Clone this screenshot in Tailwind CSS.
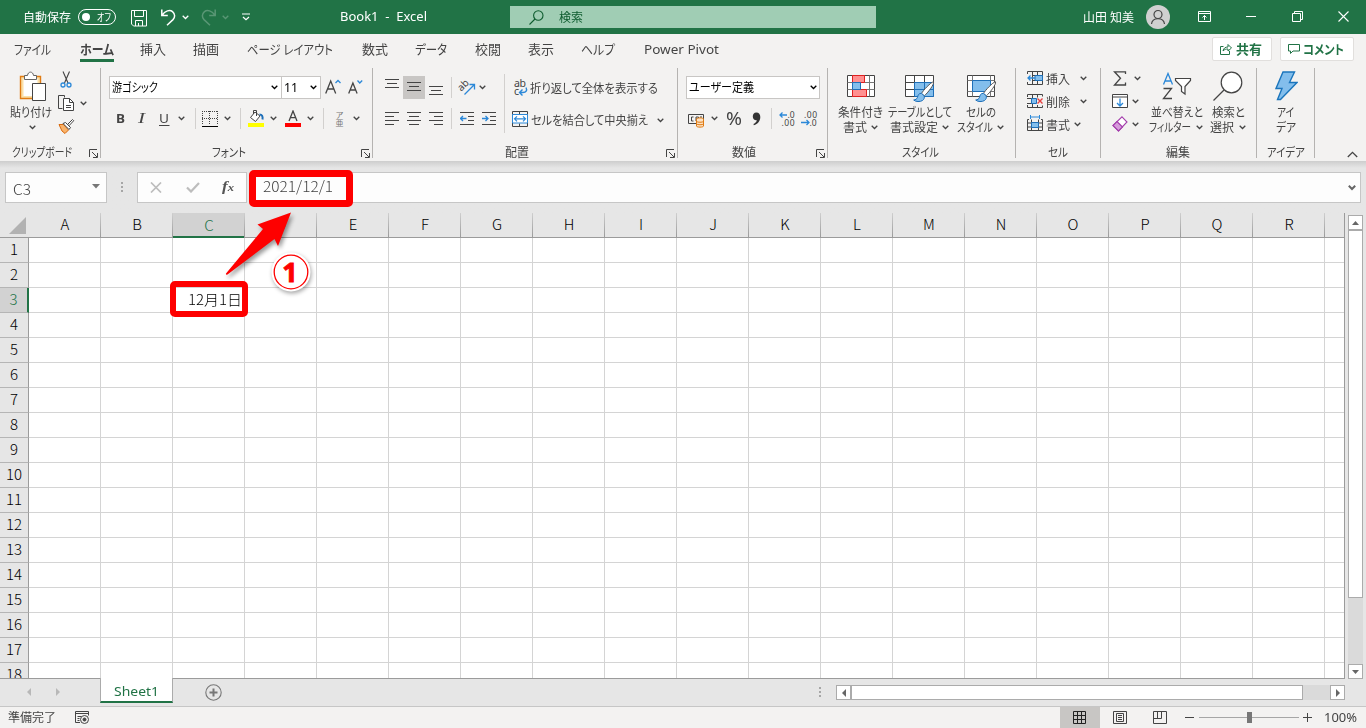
<!DOCTYPE html>
<html lang="ja">
<head>
    <meta charset="UTF-8">
    <meta name="viewport" content="width=device-width, initial-scale=1.0">
    <title>Book1 - Excel</title>
    <script src="https://cdn.jsdelivr.net/npm/@tailwindcss/browser@4"></script>
</head>
<body class="bg-[#e6e6e6] overflow-hidden font-['Noto_Sans','Noto_Sans_CJK_JP',sans-serif] text-[12px] leading-[15px] text-[#444] [font-feature-settings:'palt']">
    <!-- Shared symbols -->
    <svg class="hidden">
        <symbol id="chev" viewBox="0 0 7 5"><path d="M.7 .8 3.5 3.5 6.3 .8" fill="none" stroke="currentColor" stroke-width="1.3"/></symbol>
        <symbol id="launch" viewBox="0 0 9 9"><path d="M.5 8V.5H8M3 3l5 5M8.500 4v4.500H4" fill="none" stroke="currentColor"/></symbol>
        <symbol id="brush" viewBox="0 0 22 22"><path d="M20.500 .8C18 1 10 9.500 8.500 12.500l2.800 2.400C14.500 12 21.500 3.500 20.500.8z" fill="#fff" stroke="#555"/><path d="M8.500 12.300c-3 0-3.500 2-4 4-.5 1.700-2 2.500-3.800 2.700 2 2 6.500 2 8.800.5 1.700-1.200 2.200-3 1.700-4.700z" fill="#83beec" stroke="#1e6fb8"/></symbol>
    </svg>

    <div class="h-[728px] w-[1366px] flex flex-col relative">
        <!-- Title bar -->
        <header class="h-[34px] shrink-0 bg-[#217346] text-white flex items-center whitespace-nowrap">
            <span data-w="48" class="ml-[23px]">自動保存</span>
            <div class="ml-[7px] w-[38px] h-[16px] rounded-full border border-white flex items-center">
                <div class="ml-[3px] size-[8px] rounded-full bg-white"></div>
                <span data-w="14" class="ml-[7px] text-[10px] leading-[12px]">オフ</span>
            </div>
            <svg class="ml-[15px] mt-[2px] w-[16px] h-[17px]" viewBox="0 0 16 17" fill="none" stroke="#fff"><path d="M.5 .5h15v15.500H2.500l-2-2zM3.500 .5v6h9v-6M4.500 16v-5.500h7V16M7.500 13v3"/></svg>
            <svg class="ml-[14px] w-[15px] h-[17px]" viewBox="0 0 15 17" fill="none" stroke="#fff" stroke-width="1.500"><path d="M.8 .5v6h6M1 6.300C4 1.500 9 .5 11.500 2.600c3 2.600 2.500 6 .5 8L6 16.300"/></svg>
            <svg class="ml-[6px] w-[7px] h-[5px]"><use href="#chev"/></svg>
            <svg class="ml-[12px] w-[15px] h-[17px] opacity-25" viewBox="0 0 15 17" fill="none" stroke="#fff" stroke-width="1.500"><path d="M14.200 .5v6h-6M14 6.300C11 1.500 6 .5 3.500 2.600c-3 2.600-2.500 6-.5 8L9 16.300"/></svg>
            <svg class="ml-[6px] w-[7px] h-[5px] opacity-25"><use href="#chev"/></svg>
            <svg class="ml-[13px] w-[8px] h-[8px]" viewBox="0 0 8 8" fill="none" stroke="#fff" stroke-width="1.200"><path d="M0 1h8M1 4l3 2.700L7 4"/></svg>
            <span data-w="87" class="ml-[90px] mb-px whitespace-pre">Book1  -  Excel</span>
            <div class="ml-[83px] w-[366px] h-[22px] bg-[#a0cdb4] text-[#0e5c2f] flex items-center">
                <svg class="ml-[19px] size-[15px]" viewBox="0 0 15 15" fill="none" stroke="#0e5c2f" stroke-width="1.100"><circle cx="9.300" cy="5.500" r="4.700"/><path d="M6 9 .5 14.500"/></svg>
                <span data-w="24" class="ml-[15px]">検索</span>
            </div>
            <span data-w="51" class="ml-[207px]">山田 知美</span>
            <svg class="ml-[12px] size-[24px]" viewBox="0 0 24 24"><circle cx="12" cy="12" r="12" fill="#d0d0d0"/><g fill="none" stroke="#444" stroke-width="1.200"><circle cx="12" cy="9.500" r="4"/><path d="M5.500 19c.7-7 12.300-7 13 0"/></g></svg>
            <svg class="ml-[28px] -mt-[2px] w-[13px] h-[11px]" viewBox="0 0 13 11" fill="none" stroke="#fff"><path d="M.5 .5h12v10H.5zM.5 2.500h12M6.500 9V4.500M4.500 6.500l2-2 2 2"/></svg>
            <svg class="ml-[35px] -mt-[2px] w-[10px] h-[11px]" viewBox="0 0 10 11" stroke="#fff"><path d="M0 5.500h10"/></svg>
            <svg class="ml-[36px] -mt-[2px] size-[11px]" viewBox="0 0 11 11" fill="none" stroke="#fff"><path d="M.5 2.500h8v8h-8zM2.500 2.500v-2h8v8h-2"/></svg>
            <svg class="ml-[35px] -mt-[2px] size-[11px]" viewBox="0 0 11 11" stroke="#fff" stroke-width="1.100"><path d="M.5 .5l10 10M10.500 .5l-10 10"/></svg>
        </header>

        <!-- Tabs -->
        <nav class="h-[32px] shrink-0 bg-[#f3f2f1] flex items-start pt-[7px] text-[13px] leading-[17px] whitespace-nowrap">
            <span data-w="37" class="ml-[14px]">ファイル</span>
            <div class="ml-[29px] w-[34px] h-[21px] border-b-3 border-[#217346] font-bold"><span data-w="34">ホーム</span></div>
            <span data-w="26" class="ml-[26px]">挿入</span>
            <span data-w="26" class="ml-[27px]">描画</span>
            <span data-w="86" class="ml-[28px]">ページ レイアウト</span>
            <span data-w="26" class="ml-[29px]">数式</span>
            <span data-w="32" class="ml-[27px]">データ</span>
            <span data-w="26" class="ml-[28px]">校閲</span>
            <span data-w="26" class="ml-[27px]">表示</span>
            <span data-w="34" class="ml-[27px]">ヘルプ</span>
            <span data-w="75" class="ml-[29px] text-[12.500px]">Power Pivot</span>
            <div class="ml-[493px] -mt-[4px] w-[60px] h-[24px] bg-white border border-[#e1dfdd] rounded-[2px] flex items-center text-[#217346] font-bold">
                <svg class="ml-[7px] size-[12px]" viewBox="0 0 12 12" fill="none" stroke="#217346"><path d="M3.500 3.500h-3v8h9V8M3 8c.5-3 2.500-4 5-4V1.500L11.500 5 8 8V6C6 6 4.500 6.300 3 8z"/></svg>
                <span data-w="26" class="ml-[4px]">共有</span>
            </div>
            <div class="ml-[8px] -mt-[4px] w-[74px] h-[24px] bg-white border border-[#e1dfdd] rounded-[2px] flex items-center text-[#217346] font-bold">
                <svg class="ml-[7px] size-[12px]" viewBox="0 0 12 12" fill="none" stroke="#217346"><path d="M.5 1.500h11v6.500H5l-2.500 2.500V8h-2z"/></svg>
                <span data-w="41" class="ml-[3px]">コメント</span>
            </div>
        </nav>

        <!-- Ribbon -->
        <section class="h-[95px] shrink-0 bg-[#f3f2f1] flex items-start pt-[2px] whitespace-nowrap">
            <!-- Clipboard -->
            <div class="w-[101px] h-[90px] border-r border-[#b5b3b1] flex flex-col">
                <div class="h-[76px] flex">
                    <div class="ml-[10px] w-[42px] flex flex-col pt-[3px]">
                        <svg class="w-[28px] h-[31px] ml-[9px]" viewBox="0 0 28 31" fill="none"><path d="M1.500 5.500h20v22h-20z" fill="#fbe0a8" stroke="#e07b12" stroke-width="1.400"/><path d="M4.500 8h14v17h-14z" fill="#fff"/><path d="M5.500 8.500v-4h3C9 0 14 0 14.500 4.500h3v4z" fill="#fff" stroke="#666"/><path d="M13.500 12.500h13v17h-13z" fill="#fff" stroke="#444"/></svg>
                        <span data-w="42" class="mt-[3px]">貼り付け</span>
                        <svg class="mt-[5px] ml-[19px] w-[7px] h-[5px]"><use href="#chev"/></svg>
                    </div>
                    <div class="ml-[6px] pt-[3px] flex flex-col">
                        <svg class="w-[17px] h-[18px]" viewBox="0 0 17 18" fill="none"><path d="M5 .5l5 11.500M11.500 .5l-5 11.500" stroke="#444" stroke-width="1.100"/><circle cx="5" cy="14" r="2" stroke="#2b88d8" stroke-width="1.300"/><circle cx="11" cy="14" r="2" stroke="#2b88d8" stroke-width="1.300"/></svg>
                        <div class="mt-[5px] flex items-center">
                            <svg class="w-[17px] h-[18px]" viewBox="0 0 17 18" fill="none" stroke="#444"><path d="M6.500 3.500v-2h-6v13h4"/><path d="M5.500 4.500h6l4 4v8h-10z" fill="#fff"/><path d="M11.500 4.500v4h4M8 11.500h5M8 13.500h5"/></svg>
                            <svg class="ml-[5px] w-[7px] h-[5px]"><use href="#chev"/></svg>
                        </div>
                        <svg class="mt-[6px] w-[17px] h-[17px]" viewBox="0 0 17 17"><path d="M1 6.500l3 6.500 3 2.500 3.500-3.500-5-5.500z" fill="#f9b36b" stroke="#d9690c"/><path d="M5 5.500l6 6 1.500-2-5-5z" fill="#fff" stroke="#444"/><path d="M9.500 6.500l5-5 1.200 1.200-4.700 5z" fill="#fff" stroke="#444"/></svg>
                    </div>
                </div>
                <div class="flex h-[14px] shrink-0"><span data-w="60" class="ml-[12px] mt-px">クリップボード</span><svg class="ml-[17px] mt-[5px] size-[9px]"><use href="#launch"/></svg></div>
            </div>
            <!-- Font -->
            <div class="w-[272px] h-[90px] border-r border-[#b5b3b1] flex flex-col">
                <div class="mt-[8px] h-[23px] flex items-center text-black">
                    <div class="ml-[8px] w-[173px] h-[23px] bg-white border border-[#c8c6c4] flex items-center"><span data-w="46" class="ml-[2px]">游ゴシック</span><svg class="ml-[113px] w-[7px] h-[5px]"><use href="#chev"/></svg></div>
                    <div class="-ml-px w-[40px] h-[23px] bg-white border border-[#c8c6c4] flex items-center"><span data-w="14" class="ml-[2px]">11</span><svg class="ml-[12px] w-[7px] h-[5px]"><use href="#chev"/></svg></div>
                    <svg class="ml-[4px] -mt-[2px] w-[16px] h-[16px]" viewBox="0 0 16 16" fill="none"><path d="M.7 14.500 5.700 2 10.700 14.500M2.500 10h6.500" stroke="#444" stroke-width="1.300"/><path d="M10.500 4l2.500-2.500L15.500 4" stroke="#2b88d8" stroke-width="1.300"/></svg>
                    <svg class="ml-[7px] -mt-[2px] w-[15px] h-[16px]" viewBox="0 0 15 16" fill="none"><path d="M.7 14.500 4.900 4 9.100 14.500M2.300 11h5.200" stroke="#444" stroke-width="1.300"/><path d="M9.500 1.500l2.300 2.500L14.200 1.500" stroke="#2b88d8" stroke-width="1.300"/></svg>
                </div>
                <div class="mt-[8px] h-[23px] mb-[14px] flex items-center">
                    <span data-w="9" class="ml-[15px] font-bold text-[13px]">B</span>
                    <span data-w="7" class="ml-[13px] font-['Liberation_Serif',serif] italic text-[14px]">I</span>
                    <span data-w="10" class="ml-[14px] border-b border-[#444] text-[13px] leading-[13px]">U</span>
                    <svg class="ml-[9px] w-[7px] h-[5px]"><use href="#chev"/></svg>
                    <div class="ml-[10px] w-px h-[21px] bg-[#d2d0ce]"></div>
                    <svg class="ml-[6px] size-[16px]" viewBox="0 0 16 16" fill="none" stroke="#444"><path d="M0 .5h16M.5 0v14M15.500 0v14M7.500 0v14M0 7.500h16" stroke-dasharray="1 1" shape-rendering="crispEdges"/><path d="M0 15.500h16" stroke="#000"/></svg>
                    <svg class="ml-[6px] w-[7px] h-[5px]"><use href="#chev"/></svg>
                    <div class="ml-[9px] w-px h-[21px] bg-[#d2d0ce]"></div>
                    <svg class="ml-[7px] w-[17px] h-[17px]" viewBox="0 0 17 17" fill="none"><path d="M7 2 2.500 7.500 7.500 11.500 12 6 7 2zM8.500 6V.5h-3V4" stroke="#444" fill="#fff"/><path d="M11.500 4.500c2.500 0 3.500 1.500 3 5" stroke="#1e6fb8" stroke-width="2"/><path d="M0 13h16v4H0z" fill="#ff0"/></svg>
                    <svg class="ml-[5px] w-[7px] h-[5px]"><use href="#chev"/></svg>
                    <svg class="ml-[8px] w-[16px] h-[17px]" viewBox="0 0 16 17" fill="none"><path d="M4 11 8 1l4 10M5.500 7.700h5" stroke="#444" stroke-width="1.300"/><path d="M0 13h16v4H0z" fill="#f00"/></svg>
                    <svg class="ml-[6px] w-[7px] h-[5px]"><use href="#chev"/></svg>
                    <div class="ml-[9px] w-px h-[21px] bg-[#d2d0ce]"></div>
                    <div class="ml-[11px] w-[9px] flex flex-col items-center text-[8px] leading-[8px] text-[#777]"><span>ア</span><span>亜</span></div>
                    <svg class="ml-[9px] w-[7px] h-[5px]"><use href="#chev"/></svg>
                </div>
                <div class="flex h-[14px] shrink-0"><span data-w="34" class="ml-[111px] mt-px">フォント</span><svg class="ml-[115px] mt-[5px] size-[9px]"><use href="#launch"/></svg></div>
            </div>
            <!-- Alignment -->
            <div class="w-[305px] h-[90px] border-r border-[#b5b3b1] flex flex-col">
                <div class="h-[76px] flex">
                    <div class="w-[131px] flex flex-col">
                        <div class="mt-[8px] h-[23px] flex items-center">
                            <svg class="ml-[12px] w-[14px] h-[21px]" viewBox="0 0 14 21" stroke="#444"><path d="M0 2.500h14M2 6.500h10M0 10.500h14"/></svg>
                            <div class="ml-[4px] w-[22px] h-[23px] bg-[#c8c6c4] flex items-center justify-center"><svg class="w-[14px] h-[21px]" viewBox="0 0 14 21" stroke="#444"><path d="M0 5.500h14M2 9.500h10M0 13.500h14"/></svg></div>
                            <svg class="ml-[4px] w-[14px] h-[21px]" viewBox="0 0 14 21" stroke="#444"><path d="M0 9.500h14M2 13.500h10M0 17.500h14"/></svg>
                            <div class="ml-[8px] w-px h-[21px] bg-[#d2d0ce]"></div>
                            <svg class="ml-[7px] w-[17px] h-[17px] overflow-visible" viewBox="0 0 17 17" fill="none"><g transform="rotate(-45 5 7)"><text x="-1" y="9" font-size="10" fill="#444" font-family="Noto Sans">ab</text></g><path d="M5.500 15.500 15 6M10.500 5.500H15.500V10.500" stroke="#2b88d8" stroke-width="1.300"/></svg>
                            <svg class="ml-[3px] w-[7px] h-[5px]"><use href="#chev"/></svg>
                        </div>
                        <div class="mt-[8px] h-[23px] flex items-center">
                            <svg class="ml-[12px] w-[14px] h-[15px]" viewBox="0 0 14 15" stroke="#444"><path d="M0 1.500h14M0 5.500h9M0 9.500h14M0 13.500h9"/></svg>
                            <svg class="ml-[8px] w-[14px] h-[15px]" viewBox="0 0 14 15" stroke="#444"><path d="M0 1.500h14M2 5.500h10M0 9.500h14M2 13.500h10"/></svg>
                            <svg class="ml-[8px] w-[14px] h-[15px]" viewBox="0 0 14 15" stroke="#444"><path d="M0 1.500h14M5 5.500h9M0 9.500h14M5 13.500h9"/></svg>
                            <div class="ml-[8px] w-px h-[21px] bg-[#d2d0ce]"></div>
                            <svg class="ml-[8px] w-[14px] h-[15px]" viewBox="0 0 14 15" fill="none"><path d="M0 1.500h14M8 5.500h6M8 9.500h6M0 13.500h14" stroke="#444"/><path d="M6.500 7.500h-6M3 5 .5 7.500 3 10" stroke="#2b88d8" stroke-width="1.300"/></svg>
                            <svg class="ml-[8px] w-[14px] h-[15px]" viewBox="0 0 14 15" fill="none"><path d="M0 1.500h14M8 5.500h6M8 9.500h6M0 13.500h14" stroke="#444"/><path d="M0 7.500h6M3.500 5 6 7.500 3.500 10" stroke="#2b88d8" stroke-width="1.300"/></svg>
                        </div>
                    </div>
                    <div class="mt-[6px] w-px h-[59px] bg-[#d2d0ce]"></div>
                    <div class="flex flex-col">
                        <div class="mt-[9px] h-[22px] flex items-center">
                            <svg class="ml-[8px] -mt-[2px] w-[16px] h-[18px] overflow-visible" viewBox="0 0 16 18" fill="none"><g font-family="Noto Sans" font-size="10.500" fill="#444"><text x="1" y="9" textLength="12">ab</text><text x="1" y="17">c</text></g><path d="M13 9.500c1.500 3 0 5-3 5H7M9.500 11.500 6.500 14.500 9.500 17.500" stroke="#2b88d8" stroke-width="1.400"/></svg>
                            <span data-w="128" class="ml-px">折り返して全体を表示する</span>
                        </div>
                        <div class="mt-[10px] h-[22px] flex items-center">
                            <svg class="ml-[7px] -mt-[2px] size-[16px]" viewBox="0 0 16 16" fill="none"><path d="M.5 .5h15v15H.5zM7.500 .5v3M7.500 12.500v3" stroke="#444"/><path d="M.5 3.500h15v8.500H.5z" fill="#fff" stroke="#2b88d8"/><path d="M2.500 7.800h11M5 5.300 2.500 7.800 5 10.300M11 5.300l2.500 2.500L11 10.300" stroke="#2b88d8" stroke-width="1.200"/></svg>
                            <span data-w="117" class="ml-[3px]">セルを結合して中央揃え</span>
                            <svg class="ml-[9px] w-[7px] h-[5px]"><use href="#chev"/></svg>
                        </div>
                    </div>
                </div>
                <div class="flex h-[14px] shrink-0"><span data-w="24" class="ml-[132px] mt-px">配置</span><svg class="ml-[137px] mt-[5px] size-[9px]"><use href="#launch"/></svg></div>
            </div>
            <!-- Number -->
            <div class="w-[150px] h-[90px] border-r border-[#b5b3b1] flex flex-col">
                <div class="mt-[8px] ml-[8px] w-[134px] h-[23px] bg-white border border-[#c8c6c4] flex items-center text-black"><span data-w="65" class="ml-[2px]">ユーザー定義</span><svg class="ml-[56px] w-[7px] h-[5px]"><use href="#chev"/></svg></div>
                <div class="mt-[8px] h-[23px] mb-[14px] flex items-center">
                    <svg class="ml-[10px] mt-[3px] w-[17px] h-[15px]" viewBox="0 0 17 15" fill="none"><path d="M.5 1.500h15v9H.5z" stroke="#444"/><path d="M5.500 4h-2v4h2M8 4v4M8 4h2.500v2H8M12 4h2" stroke="#444"/><path d="M8.500 6v7c0 1.500 7 1.500 7 0V6c0-1.500-7-1.500-7 0zM8.500 8.500c1 1 6 1 7 0M8.500 11c1 1 6 1 7 0" fill="#fde2c4" stroke="#e07b12"/></svg>
                    <svg class="ml-[6px] w-[7px] h-[5px]"><use href="#chev"/></svg>
                    <span data-w="16" class="ml-[8px] text-[18px]">%</span>
                    <svg class="ml-[10px] w-[9px] h-[14px]" viewBox="0 0 9 14"><path d="M4.300 .5c2.700 0 4 2 4 4.500 0 4-2.500 7-6.500 8.200L1.500 12c2-1 3-2 3.300-3.700-2.500.2-4-1.500-4-3.700S2 .5 4.300.5z" fill="#333"/></svg>
                    <div class="ml-[10px] w-px h-[21px] bg-[#d2d0ce]"></div>
                    <svg class="ml-[7px] w-[17px] h-[17px]" viewBox="0 0 17 17" fill="none"><g font-family="Noto Sans" font-size="8.500" fill="#444"><text x="8.500" y="8" textLength="7">.0</text><text x="2.500" y="16" textLength="13">.00</text></g><path d="M8 5H1M3.500 2.500 1 5l2.500 2.500" stroke="#2b88d8" stroke-width="1.300"/></svg>
                    <svg class="ml-[5px] w-[17px] h-[17px]" viewBox="0 0 17 17" fill="none"><g font-family="Noto Sans" font-size="8.500" fill="#444"><text x="3" y="8" textLength="13">.00</text><text x="8.500" y="16" textLength="7">.0</text></g><path d="M0 12.500h8M5.500 10 8 12.500 5.500 15" stroke="#2b88d8" stroke-width="1.300"/></svg>
                </div>
                <div class="flex h-[14px] shrink-0"><span data-w="24" class="ml-[54px] mt-px">数値</span><svg class="ml-[60px] mt-[5px] size-[9px]"><use href="#launch"/></svg></div>
            </div>
            <!-- Styles -->
            <div class="w-[188px] h-[90px] border-r border-[#b5b3b1] flex flex-col">
                <div class="h-[76px] flex">
                    <div class="ml-[10px] w-[45px] flex flex-col pt-[7px]">
                        <svg class="ml-[9px] w-[29px] h-[28px]" viewBox="0 0 29 28" fill="none"><path d="M.5 .5h27v21H.5z" fill="#fff" stroke="#444"/><path d="M.5 7.500h27M.5 14.500h27M5.500 .5v21M22.500 .5v21" stroke="#777"/><path d="M5.500 .5h12v7h-12zM5.500 14.500h14v7h-14z" fill="#ff9090" stroke="#e02020"/><path d="M5.500 7.500h8v7h-8z" fill="#83beec" stroke="#1e6fb8"/></svg>
                        <span data-w="45" class="mt-[2px]">条件付き</span>
                        <div class="flex items-center pl-[5px]"><span data-w="24">書式</span><svg class="ml-[4px] w-[7px] h-[5px]"><use href="#chev"/></svg></div>
                    </div>
                    <div class="ml-[5px] w-[64px] flex flex-col pt-[7px]">
                        <svg class="ml-[17px] w-[32px] h-[28px]" viewBox="0 0 32 28" fill="none"><path d="M.5 .5h28v21H.5z" fill="#fff" stroke="#444"/><path d="M10 7.500h18.500v14H10z" fill="#83beec"/><path d="M.5 7.500h28M.5 14.500h28M9.500 .5v21M19.500 .5v21" stroke="#444"/><path d="M9.500 7.500h19v14h-19zM9.500 14.500h19M19.500 7.500v14" stroke="#1e6fb8"/><use href="#brush" x="8" y="6" width="22" height="22"/></svg>
                        <span data-w="64" class="mt-[2px]">テーブルとして</span>
                        <div class="flex items-center pl-[2px]"><span data-w="48">書式設定</span><svg class="ml-[4px] w-[7px] h-[5px]"><use href="#chev"/></svg></div>
                    </div>
                    <div class="ml-[5px] w-[50px] flex flex-col pt-[7px]">
                        <svg class="ml-[10px] w-[32px] h-[28px]" viewBox="0 0 32 28" fill="none"><path d="M.5 .5h27v21H.5z" fill="#fff" stroke="#444"/><path d="M.5 5.500h27M.5 16.500h27M5.500 .5v21M23.500 .5v21" stroke="#777"/><path d="M5.500 5.500h18v11h-18z" fill="#83beec" stroke="#1e6fb8"/><use href="#brush" x="8" y="6" width="22" height="22"/></svg>
                        <span data-w="30" class="mt-[2px] ml-[9px]">セルの</span>
                        <div class="flex items-center"><span data-w="36">スタイル</span><svg class="ml-[4px] w-[7px] h-[5px]"><use href="#chev"/></svg></div>
                    </div>
                </div>
                <div class="flex h-[14px] shrink-0"><span data-w="37" class="ml-[74px] mt-px">スタイル</span></div>
            </div>
            <!-- Cells -->
            <div class="w-[85px] h-[90px] border-r border-[#b5b3b1] flex flex-col">
                <div class="h-[76px] pl-[11px] flex flex-col">
                    <div class="h-[21px] flex items-center">
                        <svg class="w-[17px] h-[15px]" viewBox="0 0 17 15" fill="none"><path d="M.5 3V.5h15v13H.5V11M5.500 .5v13M10.500 .5v13M5 4.500h11M5 9.500h11" stroke="#444"/><path d="M8 4.500h7.500v5H8z" fill="#83beec" stroke="#1e6fb8"/><path d="M8 7H1M3.500 4.500 1 7l2.500 2.500" stroke="#2b88d8" stroke-width="1.300"/></svg>
                        <span data-w="24" class="ml-[2px] mt-[1px]">挿入</span><svg class="ml-[10px] w-[7px] h-[5px]"><use href="#chev"/></svg>
                    </div>
                    <div class="h-[25px] flex items-center">
                        <svg class="w-[17px] h-[15px]" viewBox="0 0 17 15" fill="none"><path d="M.5 3V.5h15v2M.5 11v2.500h15v-2M5.500 .5v4M10.500 .5v3M5.500 9v4.500M10.500 11v2.500M0 4.500h5M0 9.500h5" stroke="#444"/><path d="M4.500 4.500h5v5h-5z" fill="#83beec" stroke="#1e6fb8"/><path d="M10.500 4.500l5 5M15.500 4.500l-5 5" stroke="#e84040" stroke-width="1.400"/></svg>
                        <span data-w="24" class="ml-[2px] mt-[1px]">削除</span><svg class="ml-[10px] w-[7px] h-[5px]"><use href="#chev"/></svg>
                    </div>
                    <div class="h-[21px] flex items-center">
                        <svg class="-mt-[2px] w-[17px] h-[17px]" viewBox="0 0 17 17" fill="none"><path d="M2 4.500H.5v11h15v-11H14M0 8h16M0 12h16M4.500 4.500v11M11.500 4.500v11" stroke="#444"/><path d="M4.500 7.500h7v5h-7z" fill="#83beec" stroke="#1e6fb8"/><path d="M3.500 0v4M12.500 0v4M3.500 2h9" stroke="#2b88d8"/></svg>
                        <span data-w="24" class="ml-[2px] mt-[1px]">書式</span><svg class="ml-[4px] w-[7px] h-[5px]"><use href="#chev"/></svg>
                    </div>
                </div>
                <div class="flex h-[14px] shrink-0"><span data-w="20" class="ml-[32px] mt-px">セル</span></div>
            </div>
            <!-- Editing -->
            <div class="w-[156px] h-[90px] border-r border-[#b5b3b1] flex flex-col">
                <div class="h-[76px] flex">
                    <div class="pl-[11px] w-[48px] flex flex-col">
                        <div class="h-[21px] flex items-center"><svg class="w-[17px] h-[15px]" viewBox="0 0 17 15" fill="none"><path d="M13.500 3V.8H2.500L8.500 7.300 2.500 14h11v-2.500" stroke="#444" stroke-width="1.300"/></svg><svg class="ml-[5px] w-[7px] h-[5px]"><use href="#chev"/></svg></div>
                        <div class="h-[24px] flex items-center"><svg class="w-[17px] h-[15px]" viewBox="0 0 17 15" fill="none"><path d="M.5 .5h15v13H.5zM.5 3h15" stroke="#444" fill="#fff"/><path d="M8 4.500v7M5 9l3 3 3-3" stroke="#2b88d8" stroke-width="1.300"/></svg><svg class="ml-[3px] w-[7px] h-[5px]"><use href="#chev"/></svg></div>
                        <div class="h-[22px] flex items-center"><svg class="w-[17px] h-[16px]" viewBox="0 0 17 16" fill="none" stroke="#a33cab" stroke-width="1.100"><path d="M10 .8 15 6 6.500 15 1 9.500z" fill="#fff"/><path d="M5 5.500 10.500 11 6.500 15 1 9.500z" fill="#d69bdb"/></svg><svg class="ml-[3px] w-[7px] h-[5px]"><use href="#chev"/></svg></div>
                    </div>
                    <div class="w-[54px] flex flex-col pt-[4px]">
                        <svg class="ml-[13px] w-[30px] h-[30px]" viewBox="0 0 30 30" fill="none" stroke-width="1.300"><path d="M1.500 12.500 6 1.500l4.500 11M3 9h6" stroke="#2b88d8"/><path d="M1.500 16.500h8L1.500 26.500h8.500" stroke="#444"/><path d="M13.500 6.500h15v2L23 14.500V22l-3.500-2.500v-5L13.500 8.500z" stroke="#444" fill="#fff" stroke-width="1.200"/></svg>
                        <span data-w="52" class="mt-[3px] ml-[2px]">並べ替えと</span>
                        <div class="flex items-center"><span data-w="42">フィルター</span><svg class="ml-[5px] w-[7px] h-[5px]"><use href="#chev"/></svg></div>
                    </div>
                    <div class="ml-[7px] w-[36px] flex flex-col pt-[3px]">
                        <svg class="ml-[3px] w-[30px] h-[31px]" viewBox="0 0 30 31" fill="none" stroke="#444" stroke-width="1.200"><circle cx="18.500" cy="11.500" r="10.300" fill="#fff"/><path d="M11 19 .5 29.500"/></svg>
                        <span data-w="33" class="mt-[3px] ml-[2px]">検索と</span>
                        <div class="flex items-center"><span data-w="24">選択</span><svg class="ml-[5px] w-[7px] h-[5px]"><use href="#chev"/></svg></div>
                    </div>
                </div>
                <div class="flex h-[14px] shrink-0"><span data-w="24" class="ml-[65px] mt-px">編集</span></div>
            </div>
            <!-- Ideas -->
            <div class="w-[58px] h-[90px] border-r border-[#b5b3b1] flex flex-col">
                <div class="h-[76px] pt-[3px] flex flex-col">
                    <svg class="ml-[18px] w-[23px] h-[31px]" viewBox="0 0 23 31"><path d="M8 1h11.500l-5 10.500H22L5.500 28.500h-3L7 17.500H1z" fill="#83beec" stroke="#1b75bc" stroke-width="1.400"/></svg>
                    <span data-w="17" class="mt-[3px] ml-[20px]">アイ</span>
                    <span data-w="20" class="ml-[19px]">デア</span>
                </div>
                <div class="flex h-[14px] shrink-0"><span data-w="38" class="ml-[10px] mt-px">アイデア</span></div>
            </div>
            <svg class="ml-[32px] mt-[83px] w-[11px] h-[7px]" viewBox="0 0 11 7" fill="none" stroke="#444" stroke-width="1.300"><path d="M.8 6 5.500 1.300 10.200 6"/></svg>
        </section>

        <!-- Formula bar -->
        <section class="h-[52px] shrink-0 flex items-start pt-[11px] bg-linear-to-b from-[#cdcdcd] to-[#e6e6e6] to-[7px] text-[#444]">
            <div class="ml-[5px] w-[102px] h-[31px] bg-[#fdfdfd] border border-[#c6c6c6] flex items-center">
                <span data-w="18" class="ml-[7px] mt-[3px] text-[14px] font-['Noto_Sans_CJK_JP',sans-serif] font-light">C3</span>
                <svg class="ml-[61px] -mt-[2px] w-[8px] h-[5px]" viewBox="0 0 8 5"><path d="M0 0h8L4 4.500z" fill="#777"/></svg>
            </div>
            <svg class="ml-[14px] mt-[10px] w-[3px] h-[11px]" viewBox="0 0 3 11" fill="#a6a6a6"><path d="M0 0h2v2H0zM0 4h2v2H0zM0 8h2v2H0z"/></svg>
            <div class="ml-[13px] w-[110px] h-[31px] bg-[#fdfdfd] border border-[#c6c6c6] flex items-center">
                <svg class="ml-[12px] w-[12px] h-[11px]" viewBox="0 0 12 11" stroke="#bdbdbd" stroke-width="1.700"><path d="M1 .5l10 10M11 .5 1 10.500"/></svg>
                <svg class="ml-[24px] w-[14px] h-[11px]" viewBox="0 0 14 11" fill="none" stroke="#bdbdbd" stroke-width="2.200"><path d="M1 5.500l4 4L13 1"/></svg>
                <span data-w="12" class="ml-[22px] -mt-[2px] font-['Liberation_Serif',serif] italic font-bold text-[15px] text-[#555]">f<span class="text-[11px]">x</span></span>
            </div>
            <div class="ml-[3px] w-[1111px] h-[31px] bg-[#fdfdfd] border border-[#c6c6c6] flex items-center">
                <span data-w="70" class="ml-[12px] mb-[4px] text-[15px] font-['Noto_Sans_CJK_JP',sans-serif] font-light">2021/12/1</span>
                <svg class="ml-[1015px] w-[8px] h-[6px]" viewBox="0 0 8 6" fill="none" stroke="#666" stroke-width="2"><path d="M.8 .8 4 4 7.200 .8"/></svg>
            </div>
        </section>

        <!-- Sheet -->
        <main class="h-[466px] shrink-0 flex font-['Noto_Sans_CJK_JP',sans-serif] font-light text-[15px] text-black">
            <div class="w-[1345px] h-[466px] border-r border-b border-[#9b9b9b] overflow-hidden">
                <div id="colHeads" class="h-[25px] flex bg-[#e6e6e6] border-b border-[#9b9b9b]">
                    <div class="w-[29px] shrink-0 flex items-end justify-end pb-[3px] pr-[3px]"><svg class="size-[17px]" viewBox="0 0 17 17"><path d="M17 0v17H0z" fill="#b2b2b2"/></svg></div>
                </div>
                <div id="rows" class="bg-white"></div>
            </div>
            <!-- Vertical scroll bar -->
            <div class="ml-[3px] mt-[2px] w-[15px] h-[464px] bg-[#dadada] flex flex-col">
                <div class="h-[15px] border border-[#ababab] bg-white flex items-center justify-center"><svg class="w-[7px] h-[4px]" viewBox="0 0 7 4"><path d="M3.500 0 7 4H0z" fill="#666"/></svg></div>
                <div class="h-[368px] border border-[#ababab] bg-white"></div>
                <div class="mt-auto h-[15px] border border-[#ababab] bg-white flex items-center justify-center"><svg class="w-[7px] h-[4px]" viewBox="0 0 7 4"><path d="M3.500 4 7 0H0z" fill="#666"/></svg></div>
            </div>
        </main>

        <!-- Sheet tabs -->
        <div class="h-[27px] shrink-0 flex items-start">
            <svg class="ml-[27px] mt-[9px] w-[5px] h-[8px]" viewBox="0 0 5 8"><path d="M4 0v8L0 4z" fill="#b8b8b8"/></svg>
            <svg class="ml-[24px] mt-[9px] w-[5px] h-[8px]" viewBox="0 0 5 8"><path d="M0 0v8l4-4z" fill="#b8b8b8"/></svg>
            <div class="ml-[39px] -mt-px w-[73px] h-[25px] bg-white border-x border-x-[#ababab] border-b-2 border-b-[#217346] flex items-center pt-[3px] text-[#217346]"><span data-w="45" class="ml-[13px] text-[12.500px]">Sheet1</span></div>
            <svg class="ml-[32px] mt-[5px] size-[17px]" viewBox="0 0 17 17" fill="none" stroke="#777"><circle cx="8.500" cy="8.500" r="7.700" stroke-width="1.100"/><path d="M4.500 8.500h8M8.500 4.500v8" stroke-width="2"/></svg>
            <svg class="ml-[597px] mt-[8px] w-[2px] h-[10px]" viewBox="0 0 2 10" fill="#a6a6a6"><path d="M0 0h2v2H0zM0 4h2v2H0zM0 8h2v2H0z"/></svg>
            <div class="ml-[15px] mt-[6px] w-[509px] h-[15px] bg-[#dadada] flex">
                <div class="w-[15px] border border-[#ababab] bg-white flex items-center justify-center"><svg class="w-[4px] h-[8px]" viewBox="0 0 4 8"><path d="M4 0v8L0 4z" fill="#666"/></svg></div>
                <div class="w-[452px] border border-[#ababab] bg-white"></div>
                <div class="ml-auto w-[15px] border border-[#ababab] bg-white flex items-center justify-center"><svg class="w-[4px] h-[8px]" viewBox="0 0 4 8"><path d="M0 0v8l4-4z" fill="#666"/></svg></div>
            </div>
        </div>

        <!-- Status bar -->
        <footer class="h-[22px] shrink-0 bg-[#f3f2f1] border-t border-[#c6c6c6] flex items-center whitespace-nowrap">
            <span data-w="48" class="ml-[8px] -mt-px">準備完了</span>
            <svg class="ml-[19px] w-[15px] h-[13px]" viewBox="0 0 15 13" fill="none" stroke="#444"><path d="M5 11.500H.5V.5h13v4M.5 2.500h13M2.500 5.500h4M2.500 7.500h2M2.500 9.500h2"/><circle cx="9.500" cy="8.500" r="4" fill="#f3f2f1"/><circle cx="9.500" cy="8.500" r="1.500" fill="#444"/></svg>
            <div class="ml-[970px] w-[40px] h-[21px] bg-[#c8c6c4] flex items-center justify-center"><svg class="-mt-px mr-px w-[13px] h-[13px]" viewBox="0 0 13 13" fill="none" stroke="#222"><path d="M.5 .5h12v12H.5zM4.500 .5v12M8.500 .5v12M.5 4.500h12M.5 8.500h12"/></svg></div>
            <svg class="ml-[13px] -mt-px w-[14px] h-[13px]" viewBox="0 0 14 13" fill="none" stroke="#444"><path d="M.5 .5h13v12H.5zM3.500 2.500h7v8h-7zM5 4.500h4M5 6.500h4M5 8.500h4"/></svg>
            <svg class="ml-[26px] -mt-px w-[14px] h-[13px]" viewBox="0 0 14 13" fill="none" stroke="#444"><path d="M.5 .5h13v12H.5zM4.500 .5v7M8.500 .5v7M.5 7.500h8"/></svg>
            <svg class="ml-[18px] -mt-px w-[9px] h-[9px]" viewBox="0 0 9 9" stroke="#444"><path d="M0 4.500h9"/></svg>
            <div class="ml-[5px] w-[100px] h-[11px] flex items-center">
                <div class="w-[48px] h-px bg-[#a6a6a6]"></div><div class="w-[5px] h-[11px] bg-[#777]"></div><div class="grow h-px bg-[#a6a6a6]"></div>
            </div>
            <svg class="ml-[4px] -mt-px w-[9px] h-[9px]" viewBox="0 0 9 9" stroke="#444"><path d="M0 4.500h9M4.500 0v9"/></svg>
            <span data-w="33" class="ml-[12px] -mt-px">100%</span>
        </footer>

        <!-- Callouts over the sheet -->
        <div class="absolute left-[249px] top-[170px] w-[104px] h-[37px] border-[7px] border-[#fe0000] rounded-[5px]"></div>
        <div class="absolute left-[170px] top-[281px] w-[78px] h-[36px] border-[6px] border-[#fe0000] rounded-[5px]"></div>
        <svg class="absolute left-[215px] top-[205px] w-[110px] h-[95px]" viewBox="215 205 110 95">
            <path d="M291 212.500 257.500 224.500 263 229 226 273.500Q225.500 275 227.500 274.500L274.500 239 278 246z" fill="#fe0000" class="drop-shadow-[2px_3px_2px_rgba(0,0,0,0.4)]"/>
            <circle cx="291" cy="272" r="19.500" fill="#fff" class="drop-shadow-[1px_2px_2px_rgba(0,0,0,0.35)]"/>
            <circle cx="291" cy="272" r="16.800" fill="none" stroke="#fe0000" stroke-width="1.300"/>
            <text x="290" y="281.500" text-anchor="middle" font-family="Noto Sans" font-weight="bold" font-size="27" fill="#fe0000" stroke="#fe0000" stroke-width=".9">1</text>
        </svg>
    </div>

    <script>
        const activeCol = 'C';
        const activeRow = 3;
        const cells = { C3: '12月1日' };
        const cols = 'ABCDEFGHIJKLMNOPQR'.split('');

        // Column headers
        const colHeads = document.getElementById('colHeads');
        const lineFade = 'w-px h-[24px] shrink-0 bg-linear-to-b from-[#cfcfcf] to-[#9b9b9b]';
        colHeads.firstElementChild.insertAdjacentHTML('afterend', cols.map(c => {
            const look = c === activeCol ? 'bg-[#d2d2d2] text-[#217346] border-b-2 border-[#217346] h-[25px] pb-px' : 'h-[24px] pb-[3px]';
            return `<div class="w-[71px] shrink-0 flex items-center justify-center pl-px ${look}">${c}</div><div class="${lineFade}"></div>`;
        }).join(''));

        // Rows
        let html = '';
        for (let r = 1; r <= 18; r++) {
            const head = r === activeRow ? 'bg-[#d2d2d2] text-[#217346] border-r-2 border-r-[#217346]' : 'bg-[#e6e6e6] border-r border-r-[#9b9b9b]';
            html += `<div class="h-[25px] flex"><div class="w-[29px] shrink-0 border-b border-b-[#b5b5b5] pb-[3px] flex items-center justify-center ${head}">${r}</div>`;
            cols.forEach(c => {
                const text = cells[c + r] ? `<span data-w="54" class="text-[14px]">${cells[c + r]}</span>` : '';
                html += `<div class="w-[72px] shrink-0 border-r border-b border-[#d4d4d4] flex items-center justify-end pb-[2px] pr-[2px] whitespace-nowrap">${text}</div>`;
            });
            html += '<div class="grow border-b border-[#d4d4d4]"></div></div>';
        }
        document.getElementById('rows').innerHTML = html;

        // Stretch each label to its own width
        function fitLabels() {
            document.querySelectorAll('[data-w]').forEach(el => {
                el.style.cssText = 'display:inline-block;white-space:pre;flex:none;width:max-content;transform-origin:0 50%';
                const w = Number(el.dataset.w);
                const natural = el.getBoundingClientRect().width;
                el.style.transform = `scaleX(${w / natural})`;
                el.style.marginRight = (w - natural) + 'px';
            });
        }
        fitLabels();
        window.addEventListener('load', fitLabels);
        document.fonts.ready.then(fitLabels);
    </script>
</body>
</html>
